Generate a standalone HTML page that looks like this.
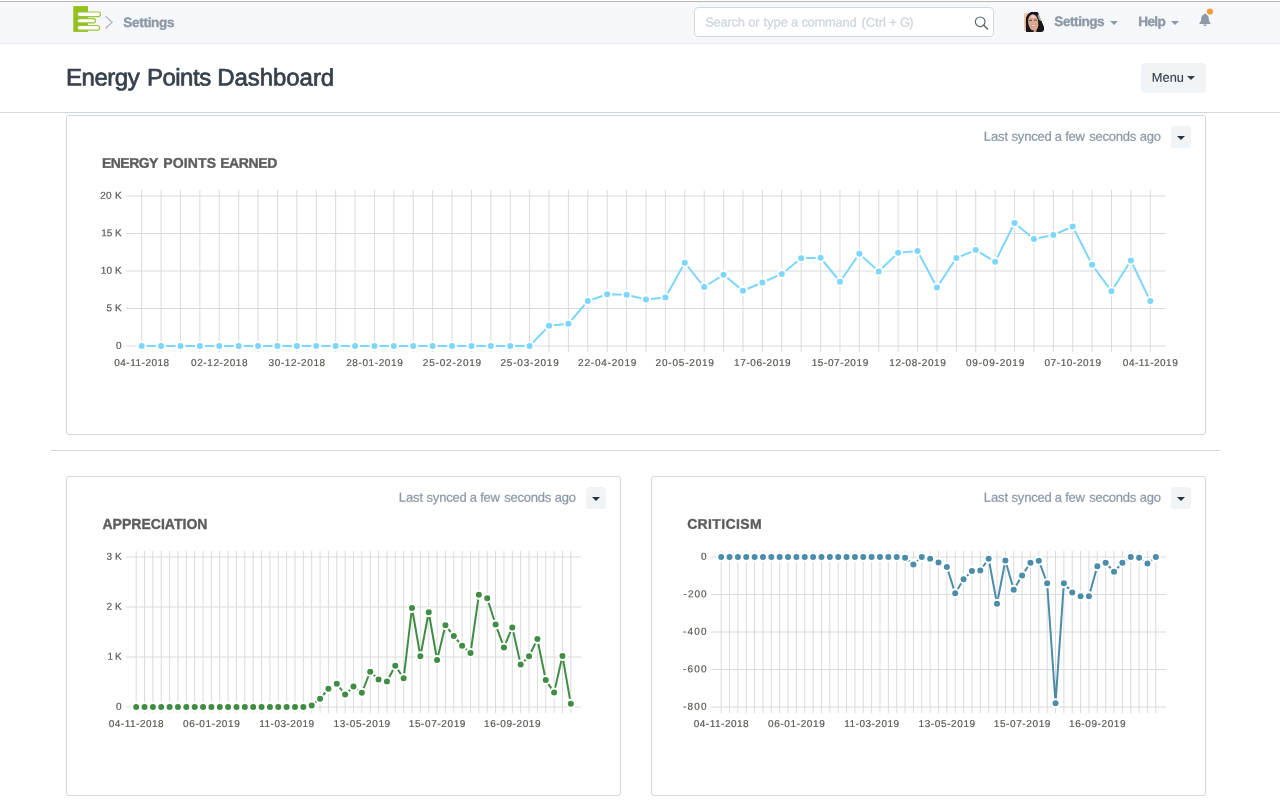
<!DOCTYPE html>
<html lang="en">
<head>
<meta charset="utf-8">
<title>Energy Points Dashboard</title>
<style>
html,body{margin:0;padding:0}
body{width:1280px;height:800px;overflow:hidden;background:#fff;font-family:"Liberation Sans", sans-serif;position:relative}
.t{position:absolute;white-space:nowrap;line-height:1;display:block}
.abs{position:absolute}
.txt{font-family:"Liberation Sans", sans-serif;overflow:visible}
.txt text{white-space:pre}
.navbar{position:absolute;left:0;top:2px;width:1280px;height:41px;background:#f5f7fa;border-bottom:1px solid #e9edf0}
.topline{position:absolute;left:0;top:1px;width:1280px;height:1px;background:#b8b5b8}
.search{position:absolute;left:694px;top:7px;width:298px;height:28px;border:1px solid #d1d8dd;border-radius:4px;background:#fff}
.page-head{position:absolute;left:0;top:44px;width:1280px;height:68px;border-bottom:1px solid #d1d8dd;background:#fff}
.btn{position:absolute;background:#f0f4f7;border-radius:4px}
.card{position:absolute;border:1px solid #d1d8dd;border-radius:3px;background:#fff;box-sizing:border-box}
.sep{position:absolute;left:51px;top:450px;width:1169px;height:1px;background:#d1d8dd}
.caret{position:absolute;width:0;height:0;border-left:4px solid transparent;border-right:4px solid transparent;border-top:4.5px solid #8d99a6}
</style>
</head>
<body>
<div id="app" style="position:absolute;left:0;top:0;width:1280px;height:800px;overflow:hidden;will-change:transform">
<div class="topline"></div>
<div class="navbar"></div>
<!-- logo -->
<svg class="abs" style="left:70px;top:4px" width="50" height="32" viewBox="70 4 50 32">
 <rect x="73.3" y="6.1" width="14.7" height="25.8" fill="#93c01f"/>
 <rect x="77.3" y="12" width="23.2" height="4.6" rx="2.3" fill="#fff" stroke="#9cc53a" stroke-width="1.2"/>
 <rect x="77.3" y="18.6" width="18.2" height="4.2" rx="2.1" fill="#fff" stroke="#9cc53a" stroke-width="1.2"/>
 <rect x="77.3" y="25.5" width="22.3" height="4.6" rx="2.3" fill="#fff" stroke="#9cc53a" stroke-width="1.2"/>
 <path d="M105.6 16.3 L112 22.3 L105.6 28.4" fill="none" stroke="#b4bcc5" stroke-width="1.5"/>
</svg>
<svg class="abs txt" id="t_crumb" style="left:119px;top:12px" width="61" height="23" viewBox="119 12 61 23"><g font-size="13.6" font-weight="700" fill="#8d99a6" stroke="#8d99a6" stroke-width="0.35"><text y="27.07" transform="rotate(0.04 148.7 27.1)"><tspan x="123.34" letter-spacing="-0.335">Settings</tspan></text></g></svg>
<div class="search"></div>
<svg class="abs txt" id="t_search" style="left:701px;top:12px" width="217" height="22" viewBox="701 12 217 22"><g font-size="13" font-weight="400" fill="#ced5dc" stroke="#ced5dc" stroke-width="0.25"><text y="26.62" transform="rotate(0.04 809.0 26.6)"><tspan x="705.20" letter-spacing="-0.301">Search</tspan> <tspan x="748.27" letter-spacing="-0.322">or</tspan> <tspan x="763.42" letter-spacing="0.027">type</tspan> <tspan x="791.00" letter-spacing="0.000">a</tspan> <tspan x="801.45" letter-spacing="-0.317">command</tspan> <tspan x="861.41" letter-spacing="-0.036">(Ctrl</tspan> <tspan x="889.18" letter-spacing="0.000">+</tspan> <tspan x="900.01" letter-spacing="-0.981">G)</tspan></text></g></svg>
<svg class="abs" style="left:972px;top:14px" width="18" height="18" viewBox="972 14 18 18">
 <circle cx="980.2" cy="21.8" r="4.8" fill="none" stroke="#55616d" stroke-width="1.15"/>
 <path d="M983.7 25.3 L987.6 29" stroke="#55616d" stroke-width="1.4" stroke-linecap="round"/>
</svg>
<!-- avatar -->
<svg class="abs" style="left:1024px;top:12px" width="20" height="20" viewBox="0 0 20 20">
 <defs><clipPath id="av"><rect x="0" y="0" width="20" height="20" rx="3"/></clipPath>
 <filter id="avb" x="-10%" y="-10%" width="120%" height="120%"><feGaussianBlur stdDeviation="0.45"/></filter></defs>
 <g clip-path="url(#av)">
  <rect width="20" height="20" fill="#f5f7f9"/>
  <g filter="url(#avb)">
  <rect x="-1" y="0.8" width="4.5" height="18.2" fill="#efc6ad"/>
  <path d="M2 21 L1.9 8 C2.2 4 4.5 1 7 0.2 L13 -0.5 C14.5 1 15.2 3 16.1 6 L20.5 17.5 L21 21 Z" fill="#17161b"/>
  <ellipse cx="9.3" cy="10.5" rx="5.1" ry="8.4" fill="#dcaa90" transform="rotate(-8 9.3 10.5)"/>
  <path d="M2 12 C2.8 5.5 5.8 1.9 9.5 1.7 C11.5 1.7 13.2 2.2 14.4 4.3 L13.4 -0.5 L7 0.2 C4 1.2 2.2 4 1.9 8 Z" fill="#17161b"/>
  <ellipse cx="9.2" cy="4.6" rx="2.6" ry="1.7" fill="#eec8c2"/>
  <path d="M12.6 2.6 C13.9 6 14.1 9 14.5 12 C14.9 15 16.3 17.5 17.3 20.5 L21 20.5 L21 17.5 L16.1 6 C15.4 3.5 14.6 1.5 13.1 0.2 Z" fill="#17161b"/>
  <path d="M5.4 8.5 L7.9 8.2 M10.3 8 L12.7 8.3" stroke="#2a1e1c" stroke-width="1" opacity="0.85"/>
  <ellipse cx="9.2" cy="13.6" rx="2.5" ry="1" fill="#b9776c"/>
  <ellipse cx="9.2" cy="13.5" rx="1.9" ry="0.55" fill="#ffffff"/>
  <rect x="2" y="18.4" width="17.5" height="3" fill="#17161b"/>
  <rect x="9.6" y="17.6" width="2.8" height="3" fill="#d19b82"/>
  <ellipse cx="15.6" cy="5.6" rx="1.5" ry="3.6" fill="#f5f7f9" opacity="0.6" transform="rotate(-20 15.6 5.6)"/>
  </g>
 </g>
</svg>
<svg class="abs txt" id="t_user" style="left:1050px;top:11px" width="60" height="23" viewBox="1050 11 60 23"><g font-size="13.6" font-weight="700" fill="#8d99a6" stroke="#8d99a6" stroke-width="0.35"><text y="25.93" transform="rotate(0.04 1079.4 25.9)"><tspan x="1054.34" letter-spacing="-0.470">Settings</tspan></text></g></svg>
<div class="caret" style="left:1110.2px;top:20.6px"></div>
<svg class="abs txt" id="t_help" style="left:1134px;top:11px" width="37" height="23" viewBox="1134 11 37 23"><g font-size="13.6" font-weight="700" fill="#8d99a6" stroke="#8d99a6" stroke-width="0.35"><text y="25.93" transform="rotate(0.04 1151.8 25.9)"><tspan x="1138.23" letter-spacing="-0.654">Help</tspan></text></g></svg>
<div class="caret" style="left:1171.2px;top:20.6px"></div>
<!-- bell -->
<svg class="abs" style="left:1196px;top:6px" width="20" height="24" viewBox="1196 6 20 24">
 <path d="M1205 13.6 C1205.6 13.6 1206 14 1206 14.6 C1207.8 15.1 1208.8 16.8 1208.8 18.8 C1208.8 21 1209.6 22 1210.5 22.9 L1210.5 23.9 L1199.5 23.9 L1199.5 22.9 C1200.4 22 1201.2 21 1201.2 18.8 C1201.2 16.8 1202.2 15.1 1204 14.6 C1204 14 1204.4 13.6 1205 13.6 Z M1203.2 24.5 A1.8 1.6 0 0 0 1206.8 24.5 Z" fill="#8d99a6"/>
 <circle cx="1209.9" cy="11.5" r="3.1" fill="#f39c3a"/>
</svg>

<div class="page-head"></div>
<svg class="abs txt" id="t_title" style="left:63px;top:60px" width="276" height="38" viewBox="63 60 276 38"><g font-size="24" font-weight="400" fill="#36414c" stroke="#36414c" stroke-width="0.7"><text y="85.55" transform="rotate(0.04 199.5 85.6)"><tspan x="65.99" letter-spacing="-0.456">Energy</tspan> <tspan x="146.92" letter-spacing="-0.496">Points</tspan> <tspan x="217.23" letter-spacing="-0.053">Dashboard</tspan></text></g></svg>
<div class="btn" style="left:1141px;top:63px;width:65px;height:30px"></div>
<svg class="abs txt" id="t_menu" style="left:1148px;top:68px" width="41" height="21" viewBox="1148 68 41 21"><g font-size="12.8" font-weight="400" fill="#36414c" stroke="#36414c" stroke-width="0.15"><text y="81.83" transform="rotate(0.04 1167.5 81.8)"><tspan x="1151.83" letter-spacing="0.045">Menu</tspan></text></g></svg>
<div class="caret" style="left:1187.2px;top:75.6px;border-top-color:#36414c"></div>

<div class="card" style="left:66px;top:115px;width:1140px;height:320px">
<svg class="chart" width="1140" height="320" viewBox="66 115 1140 320" style="position:absolute;left:-1px;top:-1px">
<g class="y-axis" stroke="#dadada" stroke-width="1">
<line x1="126.00" x2="1166.00" y1="196.00" y2="196.00"/>
<line x1="126.00" x2="1166.00" y1="233.50" y2="233.50"/>
<line x1="126.00" x2="1166.00" y1="271.00" y2="271.00"/>
<line x1="126.00" x2="1166.00" y1="308.50" y2="308.50"/>
<line x1="126.00" x2="1166.00" y1="346.00" y2="346.00"/>
</g>
<g class="x-axis" stroke="#dadada" stroke-width="1">
<line x1="141.70" x2="141.70" y1="190.00" y2="352.00"/>
<line x1="161.09" x2="161.09" y1="190.00" y2="352.00"/>
<line x1="180.49" x2="180.49" y1="190.00" y2="352.00"/>
<line x1="199.89" x2="199.89" y1="190.00" y2="352.00"/>
<line x1="219.28" x2="219.28" y1="190.00" y2="352.00"/>
<line x1="238.68" x2="238.68" y1="190.00" y2="352.00"/>
<line x1="258.08" x2="258.08" y1="190.00" y2="352.00"/>
<line x1="277.47" x2="277.47" y1="190.00" y2="352.00"/>
<line x1="296.87" x2="296.87" y1="190.00" y2="352.00"/>
<line x1="316.26" x2="316.26" y1="190.00" y2="352.00"/>
<line x1="335.66" x2="335.66" y1="190.00" y2="352.00"/>
<line x1="355.06" x2="355.06" y1="190.00" y2="352.00"/>
<line x1="374.45" x2="374.45" y1="190.00" y2="352.00"/>
<line x1="393.85" x2="393.85" y1="190.00" y2="352.00"/>
<line x1="413.25" x2="413.25" y1="190.00" y2="352.00"/>
<line x1="432.64" x2="432.64" y1="190.00" y2="352.00"/>
<line x1="452.04" x2="452.04" y1="190.00" y2="352.00"/>
<line x1="471.43" x2="471.43" y1="190.00" y2="352.00"/>
<line x1="490.83" x2="490.83" y1="190.00" y2="352.00"/>
<line x1="510.23" x2="510.23" y1="190.00" y2="352.00"/>
<line x1="529.62" x2="529.62" y1="190.00" y2="352.00"/>
<line x1="549.02" x2="549.02" y1="190.00" y2="352.00"/>
<line x1="568.42" x2="568.42" y1="190.00" y2="352.00"/>
<line x1="587.81" x2="587.81" y1="190.00" y2="352.00"/>
<line x1="607.21" x2="607.21" y1="190.00" y2="352.00"/>
<line x1="626.60" x2="626.60" y1="190.00" y2="352.00"/>
<line x1="646.00" x2="646.00" y1="190.00" y2="352.00"/>
<line x1="665.40" x2="665.40" y1="190.00" y2="352.00"/>
<line x1="684.79" x2="684.79" y1="190.00" y2="352.00"/>
<line x1="704.19" x2="704.19" y1="190.00" y2="352.00"/>
<line x1="723.58" x2="723.58" y1="190.00" y2="352.00"/>
<line x1="742.98" x2="742.98" y1="190.00" y2="352.00"/>
<line x1="762.38" x2="762.38" y1="190.00" y2="352.00"/>
<line x1="781.77" x2="781.77" y1="190.00" y2="352.00"/>
<line x1="801.17" x2="801.17" y1="190.00" y2="352.00"/>
<line x1="820.57" x2="820.57" y1="190.00" y2="352.00"/>
<line x1="839.96" x2="839.96" y1="190.00" y2="352.00"/>
<line x1="859.36" x2="859.36" y1="190.00" y2="352.00"/>
<line x1="878.75" x2="878.75" y1="190.00" y2="352.00"/>
<line x1="898.15" x2="898.15" y1="190.00" y2="352.00"/>
<line x1="917.55" x2="917.55" y1="190.00" y2="352.00"/>
<line x1="936.94" x2="936.94" y1="190.00" y2="352.00"/>
<line x1="956.34" x2="956.34" y1="190.00" y2="352.00"/>
<line x1="975.74" x2="975.74" y1="190.00" y2="352.00"/>
<line x1="995.13" x2="995.13" y1="190.00" y2="352.00"/>
<line x1="1014.53" x2="1014.53" y1="190.00" y2="352.00"/>
<line x1="1033.92" x2="1033.92" y1="190.00" y2="352.00"/>
<line x1="1053.32" x2="1053.32" y1="190.00" y2="352.00"/>
<line x1="1072.72" x2="1072.72" y1="190.00" y2="352.00"/>
<line x1="1092.11" x2="1092.11" y1="190.00" y2="352.00"/>
<line x1="1111.51" x2="1111.51" y1="190.00" y2="352.00"/>
<line x1="1130.91" x2="1130.91" y1="190.00" y2="352.00"/>
<line x1="1150.30" x2="1150.30" y1="190.00" y2="352.00"/>
</g>
<g class="labels" fill="#555b51" stroke="#555b51" stroke-width="0.2" font-family='"Liberation Sans", sans-serif' font-size="10">
<text x="121.60" y="198.85" transform="rotate(0.04 112.0 196.0)" text-anchor="end" textLength="21.3" lengthAdjust="spacing">20 K</text>
<text x="121.60" y="236.35" transform="rotate(0.04 112.0 233.5)" text-anchor="end" textLength="20.3" lengthAdjust="spacing">15 K</text>
<text x="121.60" y="273.85" transform="rotate(0.04 112.0 271.0)" text-anchor="end" textLength="20.8" lengthAdjust="spacing">10 K</text>
<text x="121.60" y="311.35" transform="rotate(0.04 112.0 308.5)" text-anchor="end" textLength="15" lengthAdjust="spacing">5 K</text>
<text x="121.60" y="348.85" transform="rotate(0.04 112.0 346.0)" text-anchor="end">0</text>
<text x="141.70" y="365.95" transform="rotate(0.04 141.7 363.0)" text-anchor="middle" textLength="54.9" lengthAdjust="spacing">04-11-2018</text>
<text x="219.28" y="365.95" transform="rotate(0.04 219.3 363.0)" text-anchor="middle" textLength="56.6" lengthAdjust="spacing">02-12-2018</text>
<text x="296.87" y="365.95" transform="rotate(0.04 296.9 363.0)" text-anchor="middle" textLength="56.6" lengthAdjust="spacing">30-12-2018</text>
<text x="374.45" y="365.95" transform="rotate(0.04 374.5 363.0)" text-anchor="middle" textLength="56.6" lengthAdjust="spacing">28-01-2019</text>
<text x="452.04" y="365.95" transform="rotate(0.04 452.0 363.0)" text-anchor="middle" textLength="58.3" lengthAdjust="spacing">25-02-2019</text>
<text x="529.62" y="365.95" transform="rotate(0.04 529.6 363.0)" text-anchor="middle" textLength="58.3" lengthAdjust="spacing">25-03-2019</text>
<text x="607.21" y="365.95" transform="rotate(0.04 607.2 363.0)" text-anchor="middle" textLength="58.3" lengthAdjust="spacing">22-04-2019</text>
<text x="684.79" y="365.95" transform="rotate(0.04 684.8 363.0)" text-anchor="middle" textLength="58.3" lengthAdjust="spacing">20-05-2019</text>
<text x="762.38" y="365.95" transform="rotate(0.04 762.4 363.0)" text-anchor="middle" textLength="56.6" lengthAdjust="spacing">17-06-2019</text>
<text x="839.96" y="365.95" transform="rotate(0.04 840.0 363.0)" text-anchor="middle" textLength="56.6" lengthAdjust="spacing">15-07-2019</text>
<text x="917.55" y="365.95" transform="rotate(0.04 917.5 363.0)" text-anchor="middle" textLength="56.6" lengthAdjust="spacing">12-08-2019</text>
<text x="995.13" y="365.95" transform="rotate(0.04 995.1 363.0)" text-anchor="middle" textLength="58.3" lengthAdjust="spacing">09-09-2019</text>
<text x="1072.72" y="365.95" transform="rotate(0.04 1072.7 363.0)" text-anchor="middle" textLength="56.6" lengthAdjust="spacing">07-10-2019</text>
<text x="1150.30" y="365.95" transform="rotate(0.04 1150.3 363.0)" text-anchor="middle" textLength="54.9" lengthAdjust="spacing">04-11-2019</text>
</g>
<path d="M141.70,346.00 L161.09,346.00 L180.49,346.00 L199.89,346.00 L219.28,346.00 L238.68,346.00 L258.08,346.00 L277.47,346.00 L296.87,346.00 L316.26,346.00 L335.66,346.00 L355.06,346.00 L374.45,346.00 L393.85,346.00 L413.25,346.00 L432.64,346.00 L452.04,346.00 L471.43,346.00 L490.83,346.00 L510.23,346.00 L529.62,346.00 L549.02,325.75 L568.42,323.75 L587.81,301.00 L607.21,294.25 L626.60,294.75 L646.00,299.50 L665.40,297.50 L684.79,262.75 L704.19,287.00 L723.58,274.75 L742.98,290.75 L762.38,282.50 L781.77,274.00 L801.17,258.25 L820.57,257.75 L839.96,281.75 L859.36,253.75 L878.75,271.50 L898.15,252.75 L917.55,251.00 L936.94,287.50 L956.34,258.00 L975.74,250.00 L995.13,261.75 L1014.53,223.00 L1033.92,239.00 L1053.32,235.00 L1072.72,226.50 L1092.11,264.75 L1111.51,291.25 L1130.91,260.50 L1150.30,301.00" fill="none" stroke="#7cd6fd" stroke-width="2" stroke-linejoin="miter"/>
<g fill="#7cd6fd" stroke="#fff" stroke-width="2">
<circle cx="141.70" cy="346.00" r="4"/>
<circle cx="161.09" cy="346.00" r="4"/>
<circle cx="180.49" cy="346.00" r="4"/>
<circle cx="199.89" cy="346.00" r="4"/>
<circle cx="219.28" cy="346.00" r="4"/>
<circle cx="238.68" cy="346.00" r="4"/>
<circle cx="258.08" cy="346.00" r="4"/>
<circle cx="277.47" cy="346.00" r="4"/>
<circle cx="296.87" cy="346.00" r="4"/>
<circle cx="316.26" cy="346.00" r="4"/>
<circle cx="335.66" cy="346.00" r="4"/>
<circle cx="355.06" cy="346.00" r="4"/>
<circle cx="374.45" cy="346.00" r="4"/>
<circle cx="393.85" cy="346.00" r="4"/>
<circle cx="413.25" cy="346.00" r="4"/>
<circle cx="432.64" cy="346.00" r="4"/>
<circle cx="452.04" cy="346.00" r="4"/>
<circle cx="471.43" cy="346.00" r="4"/>
<circle cx="490.83" cy="346.00" r="4"/>
<circle cx="510.23" cy="346.00" r="4"/>
<circle cx="529.62" cy="346.00" r="4"/>
<circle cx="549.02" cy="325.75" r="4"/>
<circle cx="568.42" cy="323.75" r="4"/>
<circle cx="587.81" cy="301.00" r="4"/>
<circle cx="607.21" cy="294.25" r="4"/>
<circle cx="626.60" cy="294.75" r="4"/>
<circle cx="646.00" cy="299.50" r="4"/>
<circle cx="665.40" cy="297.50" r="4"/>
<circle cx="684.79" cy="262.75" r="4"/>
<circle cx="704.19" cy="287.00" r="4"/>
<circle cx="723.58" cy="274.75" r="4"/>
<circle cx="742.98" cy="290.75" r="4"/>
<circle cx="762.38" cy="282.50" r="4"/>
<circle cx="781.77" cy="274.00" r="4"/>
<circle cx="801.17" cy="258.25" r="4"/>
<circle cx="820.57" cy="257.75" r="4"/>
<circle cx="839.96" cy="281.75" r="4"/>
<circle cx="859.36" cy="253.75" r="4"/>
<circle cx="878.75" cy="271.50" r="4"/>
<circle cx="898.15" cy="252.75" r="4"/>
<circle cx="917.55" cy="251.00" r="4"/>
<circle cx="936.94" cy="287.50" r="4"/>
<circle cx="956.34" cy="258.00" r="4"/>
<circle cx="975.74" cy="250.00" r="4"/>
<circle cx="995.13" cy="261.75" r="4"/>
<circle cx="1014.53" cy="223.00" r="4"/>
<circle cx="1033.92" cy="239.00" r="4"/>
<circle cx="1053.32" cy="235.00" r="4"/>
<circle cx="1072.72" cy="226.50" r="4"/>
<circle cx="1092.11" cy="264.75" r="4"/>
<circle cx="1111.51" cy="291.25" r="4"/>
<circle cx="1130.91" cy="260.50" r="4"/>
<circle cx="1150.30" cy="301.00" r="4"/>
</g>
</svg>
</div>
<svg class="abs txt" id="t_ct1" style="left:98px;top:152px" width="184" height="24" viewBox="98 152 184 24"><g font-size="14" font-weight="700" fill="#5c5c5c" stroke="#5c5c5c" stroke-width="0.35"><text y="167.72" transform="rotate(0.04 189.4 167.7)"><tspan x="102.01" letter-spacing="-0.552">ENERGY</tspan> <tspan x="163.17" letter-spacing="0.141">POINTS</tspan> <tspan x="220.17" letter-spacing="-0.393">EARNED</tspan></text></g></svg>
<svg class="abs txt" id="t_sync1" style="left:980px;top:126px" width="186" height="22" viewBox="980 126 186 22"><g font-size="13" font-weight="400" fill="#8d99a6" stroke="#8d99a6" stroke-width="0.25"><text y="140.78" transform="rotate(0.04 1072.2 140.8)"><tspan x="983.86" letter-spacing="-0.110">Last</tspan> <tspan x="1011.56" letter-spacing="-0.204">synced</tspan> <tspan x="1054.68" letter-spacing="0.000">a</tspan> <tspan x="1065.32" letter-spacing="-0.358">few</tspan> <tspan x="1089.13" letter-spacing="-0.213">seconds</tspan> <tspan x="1139.77" letter-spacing="-0.188">ago</tspan></text></g></svg>
<div class="btn" style="left:1171px;top:126px;width:20px;height:21.5px;border-radius:3px"></div>
<div class="caret" style="left:1176.8px;top:135.6px;border-top-color:#2b333b;border-top-width:4px"></div>

<div class="sep"></div>

<div class="card" style="left:66px;top:476px;width:555px;height:320px">
<svg class="chart" width="555" height="320" viewBox="66 476 555 320" style="position:absolute;left:-1px;top:-1px">
<g class="y-axis" stroke="#dadada" stroke-width="1">
<line x1="126.00" x2="581.00" y1="557.00" y2="557.00"/>
<line x1="126.00" x2="581.00" y1="607.00" y2="607.00"/>
<line x1="126.00" x2="581.00" y1="657.00" y2="657.00"/>
<line x1="126.00" x2="581.00" y1="707.00" y2="707.00"/>
</g>
<g class="x-axis" stroke="#dadada" stroke-width="1">
<line x1="136.18" x2="136.18" y1="551.00" y2="713.00"/>
<line x1="144.54" x2="144.54" y1="551.00" y2="713.00"/>
<line x1="152.90" x2="152.90" y1="551.00" y2="713.00"/>
<line x1="161.25" x2="161.25" y1="551.00" y2="713.00"/>
<line x1="169.61" x2="169.61" y1="551.00" y2="713.00"/>
<line x1="177.97" x2="177.97" y1="551.00" y2="713.00"/>
<line x1="186.33" x2="186.33" y1="551.00" y2="713.00"/>
<line x1="194.69" x2="194.69" y1="551.00" y2="713.00"/>
<line x1="203.05" x2="203.05" y1="551.00" y2="713.00"/>
<line x1="211.41" x2="211.41" y1="551.00" y2="713.00"/>
<line x1="219.76" x2="219.76" y1="551.00" y2="713.00"/>
<line x1="228.12" x2="228.12" y1="551.00" y2="713.00"/>
<line x1="236.48" x2="236.48" y1="551.00" y2="713.00"/>
<line x1="244.84" x2="244.84" y1="551.00" y2="713.00"/>
<line x1="253.20" x2="253.20" y1="551.00" y2="713.00"/>
<line x1="261.56" x2="261.56" y1="551.00" y2="713.00"/>
<line x1="269.92" x2="269.92" y1="551.00" y2="713.00"/>
<line x1="278.27" x2="278.27" y1="551.00" y2="713.00"/>
<line x1="286.63" x2="286.63" y1="551.00" y2="713.00"/>
<line x1="294.99" x2="294.99" y1="551.00" y2="713.00"/>
<line x1="303.35" x2="303.35" y1="551.00" y2="713.00"/>
<line x1="311.71" x2="311.71" y1="551.00" y2="713.00"/>
<line x1="320.07" x2="320.07" y1="551.00" y2="713.00"/>
<line x1="328.42" x2="328.42" y1="551.00" y2="713.00"/>
<line x1="336.78" x2="336.78" y1="551.00" y2="713.00"/>
<line x1="345.14" x2="345.14" y1="551.00" y2="713.00"/>
<line x1="353.50" x2="353.50" y1="551.00" y2="713.00"/>
<line x1="361.86" x2="361.86" y1="551.00" y2="713.00"/>
<line x1="370.22" x2="370.22" y1="551.00" y2="713.00"/>
<line x1="378.58" x2="378.58" y1="551.00" y2="713.00"/>
<line x1="386.93" x2="386.93" y1="551.00" y2="713.00"/>
<line x1="395.29" x2="395.29" y1="551.00" y2="713.00"/>
<line x1="403.65" x2="403.65" y1="551.00" y2="713.00"/>
<line x1="412.01" x2="412.01" y1="551.00" y2="713.00"/>
<line x1="420.37" x2="420.37" y1="551.00" y2="713.00"/>
<line x1="428.73" x2="428.73" y1="551.00" y2="713.00"/>
<line x1="437.08" x2="437.08" y1="551.00" y2="713.00"/>
<line x1="445.44" x2="445.44" y1="551.00" y2="713.00"/>
<line x1="453.80" x2="453.80" y1="551.00" y2="713.00"/>
<line x1="462.16" x2="462.16" y1="551.00" y2="713.00"/>
<line x1="470.52" x2="470.52" y1="551.00" y2="713.00"/>
<line x1="478.88" x2="478.88" y1="551.00" y2="713.00"/>
<line x1="487.24" x2="487.24" y1="551.00" y2="713.00"/>
<line x1="495.59" x2="495.59" y1="551.00" y2="713.00"/>
<line x1="503.95" x2="503.95" y1="551.00" y2="713.00"/>
<line x1="512.31" x2="512.31" y1="551.00" y2="713.00"/>
<line x1="520.67" x2="520.67" y1="551.00" y2="713.00"/>
<line x1="529.03" x2="529.03" y1="551.00" y2="713.00"/>
<line x1="537.39" x2="537.39" y1="551.00" y2="713.00"/>
<line x1="545.75" x2="545.75" y1="551.00" y2="713.00"/>
<line x1="554.10" x2="554.10" y1="551.00" y2="713.00"/>
<line x1="562.46" x2="562.46" y1="551.00" y2="713.00"/>
<line x1="570.82" x2="570.82" y1="551.00" y2="713.00"/>
</g>
<g class="labels" fill="#555b51" stroke="#555b51" stroke-width="0.2" font-family='"Liberation Sans", sans-serif' font-size="10">
<text x="121.60" y="559.85" transform="rotate(0.04 112.0 557.0)" text-anchor="end" textLength="15" lengthAdjust="spacing">3 K</text>
<text x="121.60" y="609.85" transform="rotate(0.04 112.0 607.0)" text-anchor="end" textLength="15" lengthAdjust="spacing">2 K</text>
<text x="121.60" y="659.85" transform="rotate(0.04 112.0 657.0)" text-anchor="end" textLength="14" lengthAdjust="spacing">1 K</text>
<text x="121.60" y="709.85" transform="rotate(0.04 112.0 707.0)" text-anchor="end">0</text>
<text x="136.18" y="726.95" transform="rotate(0.04 136.2 724.0)" text-anchor="middle" textLength="54.9" lengthAdjust="spacing">04-11-2018</text>
<text x="211.41" y="726.95" transform="rotate(0.04 211.4 724.0)" text-anchor="middle" textLength="56.6" lengthAdjust="spacing">06-01-2019</text>
<text x="286.63" y="726.95" transform="rotate(0.04 286.6 724.0)" text-anchor="middle" textLength="54.9" lengthAdjust="spacing">11-03-2019</text>
<text x="361.86" y="726.95" transform="rotate(0.04 361.9 724.0)" text-anchor="middle" textLength="56.6" lengthAdjust="spacing">13-05-2019</text>
<text x="437.08" y="726.95" transform="rotate(0.04 437.1 724.0)" text-anchor="middle" textLength="56.6" lengthAdjust="spacing">15-07-2019</text>
<text x="512.31" y="726.95" transform="rotate(0.04 512.3 724.0)" text-anchor="middle" textLength="56.6" lengthAdjust="spacing">16-09-2019</text>
</g>
<path d="M136.18,707.00 L144.54,707.00 L152.90,707.00 L161.25,707.00 L169.61,707.00 L177.97,707.00 L186.33,707.00 L194.69,707.00 L203.05,707.00 L211.41,707.00 L219.76,707.00 L228.12,707.00 L236.48,707.00 L244.84,707.00 L253.20,707.00 L261.56,707.00 L269.92,707.00 L278.27,707.00 L286.63,707.00 L294.99,707.00 L303.35,707.00 L311.71,705.50 L320.07,698.75 L328.42,688.75 L336.78,683.75 L345.14,694.50 L353.50,686.50 L361.86,692.75 L370.22,671.75 L378.58,679.50 L386.93,681.50 L395.29,665.75 L403.65,678.25 L412.01,608.00 L420.37,656.25 L428.73,612.25 L437.08,660.00 L445.44,625.20 L453.80,636.00 L462.16,645.80 L470.52,653.00 L478.88,594.80 L487.24,598.20 L495.59,624.50 L503.95,647.40 L512.31,627.40 L520.67,664.60 L529.03,656.30 L537.39,639.10 L545.75,680.00 L554.10,692.60 L562.46,656.00 L570.82,703.80" fill="none" stroke="#3f8c43" stroke-width="2" stroke-linejoin="miter"/>
<g fill="#3f8c43" stroke="#fff" stroke-width="2">
<circle cx="136.18" cy="707.00" r="4"/>
<circle cx="144.54" cy="707.00" r="4"/>
<circle cx="152.90" cy="707.00" r="4"/>
<circle cx="161.25" cy="707.00" r="4"/>
<circle cx="169.61" cy="707.00" r="4"/>
<circle cx="177.97" cy="707.00" r="4"/>
<circle cx="186.33" cy="707.00" r="4"/>
<circle cx="194.69" cy="707.00" r="4"/>
<circle cx="203.05" cy="707.00" r="4"/>
<circle cx="211.41" cy="707.00" r="4"/>
<circle cx="219.76" cy="707.00" r="4"/>
<circle cx="228.12" cy="707.00" r="4"/>
<circle cx="236.48" cy="707.00" r="4"/>
<circle cx="244.84" cy="707.00" r="4"/>
<circle cx="253.20" cy="707.00" r="4"/>
<circle cx="261.56" cy="707.00" r="4"/>
<circle cx="269.92" cy="707.00" r="4"/>
<circle cx="278.27" cy="707.00" r="4"/>
<circle cx="286.63" cy="707.00" r="4"/>
<circle cx="294.99" cy="707.00" r="4"/>
<circle cx="303.35" cy="707.00" r="4"/>
<circle cx="311.71" cy="705.50" r="4"/>
<circle cx="320.07" cy="698.75" r="4"/>
<circle cx="328.42" cy="688.75" r="4"/>
<circle cx="336.78" cy="683.75" r="4"/>
<circle cx="345.14" cy="694.50" r="4"/>
<circle cx="353.50" cy="686.50" r="4"/>
<circle cx="361.86" cy="692.75" r="4"/>
<circle cx="370.22" cy="671.75" r="4"/>
<circle cx="378.58" cy="679.50" r="4"/>
<circle cx="386.93" cy="681.50" r="4"/>
<circle cx="395.29" cy="665.75" r="4"/>
<circle cx="403.65" cy="678.25" r="4"/>
<circle cx="412.01" cy="608.00" r="4"/>
<circle cx="420.37" cy="656.25" r="4"/>
<circle cx="428.73" cy="612.25" r="4"/>
<circle cx="437.08" cy="660.00" r="4"/>
<circle cx="445.44" cy="625.20" r="4"/>
<circle cx="453.80" cy="636.00" r="4"/>
<circle cx="462.16" cy="645.80" r="4"/>
<circle cx="470.52" cy="653.00" r="4"/>
<circle cx="478.88" cy="594.80" r="4"/>
<circle cx="487.24" cy="598.20" r="4"/>
<circle cx="495.59" cy="624.50" r="4"/>
<circle cx="503.95" cy="647.40" r="4"/>
<circle cx="512.31" cy="627.40" r="4"/>
<circle cx="520.67" cy="664.60" r="4"/>
<circle cx="529.03" cy="656.30" r="4"/>
<circle cx="537.39" cy="639.10" r="4"/>
<circle cx="545.75" cy="680.00" r="4"/>
<circle cx="554.10" cy="692.60" r="4"/>
<circle cx="562.46" cy="656.00" r="4"/>
<circle cx="570.82" cy="703.80" r="4"/>
</g>
</svg>
</div>
<svg class="abs txt" id="t_ct2" style="left:98px;top:513px" width="114" height="24" viewBox="98 513 114 24"><g font-size="14" font-weight="700" fill="#5c5c5c" stroke="#5c5c5c" stroke-width="0.35"><text y="528.73" transform="rotate(0.04 154.6 528.7)"><tspan x="102.47" letter-spacing="0.023">APPRECIATION</tspan></text></g></svg>
<svg class="abs txt" id="t_sync2" style="left:395px;top:487px" width="186" height="22" viewBox="395 487 186 22"><g font-size="13" font-weight="400" fill="#8d99a6" stroke="#8d99a6" stroke-width="0.25"><text y="501.77" transform="rotate(0.04 487.2 501.8)"><tspan x="398.86" letter-spacing="-0.110">Last</tspan> <tspan x="426.56" letter-spacing="-0.204">synced</tspan> <tspan x="469.68" letter-spacing="0.000">a</tspan> <tspan x="480.32" letter-spacing="-0.358">few</tspan> <tspan x="504.13" letter-spacing="-0.213">seconds</tspan> <tspan x="554.77" letter-spacing="-0.188">ago</tspan></text></g></svg>
<div class="btn" style="left:586px;top:487px;width:20px;height:21.5px;border-radius:3px"></div>
<div class="caret" style="left:591.8px;top:496.6px;border-top-color:#2b333b;border-top-width:4px"></div>

<div class="card" style="left:651px;top:476px;width:555px;height:320px">
<svg class="chart" width="555" height="320" viewBox="651 476 555 320" style="position:absolute;left:-1px;top:-1px">
<g class="y-axis" stroke="#dadada" stroke-width="1">
<line x1="711.00" x2="1166.00" y1="557.00" y2="557.00"/>
<line x1="711.00" x2="1166.00" y1="594.50" y2="594.50"/>
<line x1="711.00" x2="1166.00" y1="632.00" y2="632.00"/>
<line x1="711.00" x2="1166.00" y1="669.50" y2="669.50"/>
<line x1="711.00" x2="1166.00" y1="707.00" y2="707.00"/>
</g>
<g class="x-axis" stroke="#dadada" stroke-width="1">
<line x1="721.18" x2="721.18" y1="551.00" y2="713.00"/>
<line x1="729.54" x2="729.54" y1="551.00" y2="713.00"/>
<line x1="737.90" x2="737.90" y1="551.00" y2="713.00"/>
<line x1="746.25" x2="746.25" y1="551.00" y2="713.00"/>
<line x1="754.61" x2="754.61" y1="551.00" y2="713.00"/>
<line x1="762.97" x2="762.97" y1="551.00" y2="713.00"/>
<line x1="771.33" x2="771.33" y1="551.00" y2="713.00"/>
<line x1="779.69" x2="779.69" y1="551.00" y2="713.00"/>
<line x1="788.05" x2="788.05" y1="551.00" y2="713.00"/>
<line x1="796.41" x2="796.41" y1="551.00" y2="713.00"/>
<line x1="804.76" x2="804.76" y1="551.00" y2="713.00"/>
<line x1="813.12" x2="813.12" y1="551.00" y2="713.00"/>
<line x1="821.48" x2="821.48" y1="551.00" y2="713.00"/>
<line x1="829.84" x2="829.84" y1="551.00" y2="713.00"/>
<line x1="838.20" x2="838.20" y1="551.00" y2="713.00"/>
<line x1="846.56" x2="846.56" y1="551.00" y2="713.00"/>
<line x1="854.92" x2="854.92" y1="551.00" y2="713.00"/>
<line x1="863.27" x2="863.27" y1="551.00" y2="713.00"/>
<line x1="871.63" x2="871.63" y1="551.00" y2="713.00"/>
<line x1="879.99" x2="879.99" y1="551.00" y2="713.00"/>
<line x1="888.35" x2="888.35" y1="551.00" y2="713.00"/>
<line x1="896.71" x2="896.71" y1="551.00" y2="713.00"/>
<line x1="905.07" x2="905.07" y1="551.00" y2="713.00"/>
<line x1="913.42" x2="913.42" y1="551.00" y2="713.00"/>
<line x1="921.78" x2="921.78" y1="551.00" y2="713.00"/>
<line x1="930.14" x2="930.14" y1="551.00" y2="713.00"/>
<line x1="938.50" x2="938.50" y1="551.00" y2="713.00"/>
<line x1="946.86" x2="946.86" y1="551.00" y2="713.00"/>
<line x1="955.22" x2="955.22" y1="551.00" y2="713.00"/>
<line x1="963.58" x2="963.58" y1="551.00" y2="713.00"/>
<line x1="971.93" x2="971.93" y1="551.00" y2="713.00"/>
<line x1="980.29" x2="980.29" y1="551.00" y2="713.00"/>
<line x1="988.65" x2="988.65" y1="551.00" y2="713.00"/>
<line x1="997.01" x2="997.01" y1="551.00" y2="713.00"/>
<line x1="1005.37" x2="1005.37" y1="551.00" y2="713.00"/>
<line x1="1013.73" x2="1013.73" y1="551.00" y2="713.00"/>
<line x1="1022.08" x2="1022.08" y1="551.00" y2="713.00"/>
<line x1="1030.44" x2="1030.44" y1="551.00" y2="713.00"/>
<line x1="1038.80" x2="1038.80" y1="551.00" y2="713.00"/>
<line x1="1047.16" x2="1047.16" y1="551.00" y2="713.00"/>
<line x1="1055.52" x2="1055.52" y1="551.00" y2="713.00"/>
<line x1="1063.88" x2="1063.88" y1="551.00" y2="713.00"/>
<line x1="1072.24" x2="1072.24" y1="551.00" y2="713.00"/>
<line x1="1080.59" x2="1080.59" y1="551.00" y2="713.00"/>
<line x1="1088.95" x2="1088.95" y1="551.00" y2="713.00"/>
<line x1="1097.31" x2="1097.31" y1="551.00" y2="713.00"/>
<line x1="1105.67" x2="1105.67" y1="551.00" y2="713.00"/>
<line x1="1114.03" x2="1114.03" y1="551.00" y2="713.00"/>
<line x1="1122.39" x2="1122.39" y1="551.00" y2="713.00"/>
<line x1="1130.75" x2="1130.75" y1="551.00" y2="713.00"/>
<line x1="1139.10" x2="1139.10" y1="551.00" y2="713.00"/>
<line x1="1147.46" x2="1147.46" y1="551.00" y2="713.00"/>
<line x1="1155.82" x2="1155.82" y1="551.00" y2="713.00"/>
</g>
<g class="labels" fill="#555b51" stroke="#555b51" stroke-width="0.2" font-family='"Liberation Sans", sans-serif' font-size="10">
<text x="706.60" y="559.85" transform="rotate(0.04 697.0 557.0)" text-anchor="end">0</text>
<text x="706.60" y="597.35" transform="rotate(0.04 697.0 594.5)" text-anchor="end" textLength="23" lengthAdjust="spacing">-200</text>
<text x="706.60" y="634.85" transform="rotate(0.04 697.0 632.0)" text-anchor="end" textLength="23.5" lengthAdjust="spacing">-400</text>
<text x="706.60" y="672.35" transform="rotate(0.04 697.0 669.5)" text-anchor="end" textLength="23.5" lengthAdjust="spacing">-600</text>
<text x="706.60" y="709.85" transform="rotate(0.04 697.0 707.0)" text-anchor="end" textLength="23.5" lengthAdjust="spacing">-800</text>
<text x="721.18" y="726.95" transform="rotate(0.04 721.2 724.0)" text-anchor="middle" textLength="54.9" lengthAdjust="spacing">04-11-2018</text>
<text x="796.41" y="726.95" transform="rotate(0.04 796.4 724.0)" text-anchor="middle" textLength="56.6" lengthAdjust="spacing">06-01-2019</text>
<text x="871.63" y="726.95" transform="rotate(0.04 871.6 724.0)" text-anchor="middle" textLength="54.9" lengthAdjust="spacing">11-03-2019</text>
<text x="946.86" y="726.95" transform="rotate(0.04 946.9 724.0)" text-anchor="middle" textLength="56.6" lengthAdjust="spacing">13-05-2019</text>
<text x="1022.08" y="726.95" transform="rotate(0.04 1022.1 724.0)" text-anchor="middle" textLength="56.6" lengthAdjust="spacing">15-07-2019</text>
<text x="1097.31" y="726.95" transform="rotate(0.04 1097.3 724.0)" text-anchor="middle" textLength="56.6" lengthAdjust="spacing">16-09-2019</text>
</g>
<path d="M721.18,557.00 L729.54,557.00 L737.90,557.00 L746.25,557.00 L754.61,557.00 L762.97,557.00 L771.33,557.00 L779.69,557.00 L788.05,557.00 L796.41,557.00 L804.76,557.00 L813.12,557.00 L821.48,557.00 L829.84,557.00 L838.20,557.00 L846.56,557.00 L854.92,557.00 L863.27,557.00 L871.63,557.00 L879.99,557.00 L888.35,557.00 L896.71,557.00 L905.07,557.75 L913.42,564.40 L921.78,556.90 L930.14,558.75 L938.50,562.50 L946.86,567.00 L955.22,593.25 L963.58,579.25 L971.93,571.00 L980.29,570.50 L988.65,558.75 L997.01,603.75 L1005.37,560.50 L1013.73,589.75 L1022.08,575.50 L1030.44,562.75 L1038.80,560.75 L1047.16,583.25 L1055.52,703.25 L1063.88,583.25 L1072.24,592.50 L1080.59,596.25 L1088.95,596.25 L1097.31,566.25 L1105.67,562.75 L1114.03,571.75 L1122.39,562.75 L1130.75,557.00 L1139.10,557.75 L1147.46,563.50 L1155.82,557.00" fill="none" stroke="#4b8cab" stroke-width="2" stroke-linejoin="miter"/>
<g fill="#4b8cab" stroke="#fff" stroke-width="2">
<circle cx="721.18" cy="557.00" r="4"/>
<circle cx="729.54" cy="557.00" r="4"/>
<circle cx="737.90" cy="557.00" r="4"/>
<circle cx="746.25" cy="557.00" r="4"/>
<circle cx="754.61" cy="557.00" r="4"/>
<circle cx="762.97" cy="557.00" r="4"/>
<circle cx="771.33" cy="557.00" r="4"/>
<circle cx="779.69" cy="557.00" r="4"/>
<circle cx="788.05" cy="557.00" r="4"/>
<circle cx="796.41" cy="557.00" r="4"/>
<circle cx="804.76" cy="557.00" r="4"/>
<circle cx="813.12" cy="557.00" r="4"/>
<circle cx="821.48" cy="557.00" r="4"/>
<circle cx="829.84" cy="557.00" r="4"/>
<circle cx="838.20" cy="557.00" r="4"/>
<circle cx="846.56" cy="557.00" r="4"/>
<circle cx="854.92" cy="557.00" r="4"/>
<circle cx="863.27" cy="557.00" r="4"/>
<circle cx="871.63" cy="557.00" r="4"/>
<circle cx="879.99" cy="557.00" r="4"/>
<circle cx="888.35" cy="557.00" r="4"/>
<circle cx="896.71" cy="557.00" r="4"/>
<circle cx="905.07" cy="557.75" r="4"/>
<circle cx="913.42" cy="564.40" r="4"/>
<circle cx="921.78" cy="556.90" r="4"/>
<circle cx="930.14" cy="558.75" r="4"/>
<circle cx="938.50" cy="562.50" r="4"/>
<circle cx="946.86" cy="567.00" r="4"/>
<circle cx="955.22" cy="593.25" r="4"/>
<circle cx="963.58" cy="579.25" r="4"/>
<circle cx="971.93" cy="571.00" r="4"/>
<circle cx="980.29" cy="570.50" r="4"/>
<circle cx="988.65" cy="558.75" r="4"/>
<circle cx="997.01" cy="603.75" r="4"/>
<circle cx="1005.37" cy="560.50" r="4"/>
<circle cx="1013.73" cy="589.75" r="4"/>
<circle cx="1022.08" cy="575.50" r="4"/>
<circle cx="1030.44" cy="562.75" r="4"/>
<circle cx="1038.80" cy="560.75" r="4"/>
<circle cx="1047.16" cy="583.25" r="4"/>
<circle cx="1055.52" cy="703.25" r="4"/>
<circle cx="1063.88" cy="583.25" r="4"/>
<circle cx="1072.24" cy="592.50" r="4"/>
<circle cx="1080.59" cy="596.25" r="4"/>
<circle cx="1088.95" cy="596.25" r="4"/>
<circle cx="1097.31" cy="566.25" r="4"/>
<circle cx="1105.67" cy="562.75" r="4"/>
<circle cx="1114.03" cy="571.75" r="4"/>
<circle cx="1122.39" cy="562.75" r="4"/>
<circle cx="1130.75" cy="557.00" r="4"/>
<circle cx="1139.10" cy="557.75" r="4"/>
<circle cx="1147.46" cy="563.50" r="4"/>
<circle cx="1155.82" cy="557.00" r="4"/>
</g>
</svg>
</div>
<svg class="abs txt" id="t_ct3" style="left:683px;top:513px" width="83" height="24" viewBox="683 513 83 24"><g font-size="14" font-weight="700" fill="#5c5c5c" stroke="#5c5c5c" stroke-width="0.35"><text y="528.73" transform="rotate(0.04 724.0 528.7)"><tspan x="687.15" letter-spacing="0.360">CRITICISM</tspan></text></g></svg>
<svg class="abs txt" id="t_sync3" style="left:980px;top:487px" width="186" height="22" viewBox="980 487 186 22"><g font-size="13" font-weight="400" fill="#8d99a6" stroke="#8d99a6" stroke-width="0.25"><text y="501.77" transform="rotate(0.04 1072.2 501.8)"><tspan x="983.86" letter-spacing="-0.110">Last</tspan> <tspan x="1011.56" letter-spacing="-0.204">synced</tspan> <tspan x="1054.68" letter-spacing="0.000">a</tspan> <tspan x="1065.32" letter-spacing="-0.358">few</tspan> <tspan x="1089.13" letter-spacing="-0.213">seconds</tspan> <tspan x="1139.77" letter-spacing="-0.188">ago</tspan></text></g></svg>
<div class="btn" style="left:1171px;top:487px;width:20px;height:21.5px;border-radius:3px"></div>
<div class="caret" style="left:1176.8px;top:496.6px;border-top-color:#2b333b;border-top-width:4px"></div>
</div>
</body>
</html>
